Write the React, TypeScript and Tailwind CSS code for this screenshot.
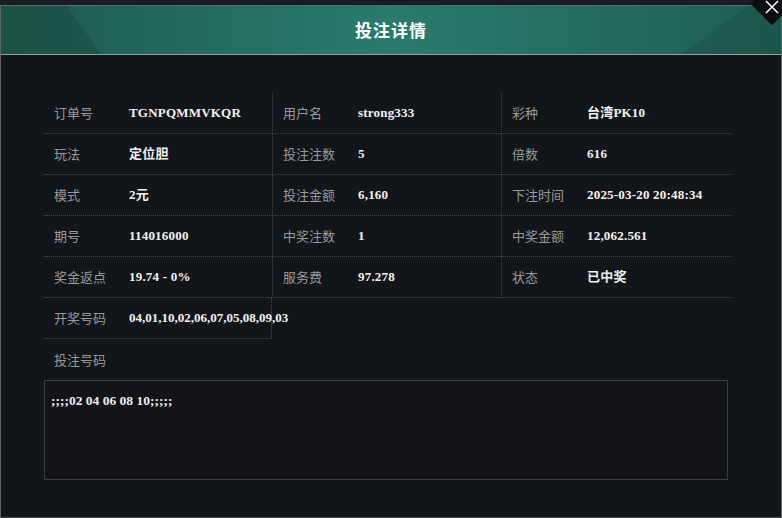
const rows: [string, string][][] = [
  [["订单号", "TGNPQMMVKQR"], ["用户名", "strong333"], ["彩种", "台湾PK10"]],
  [["玩法", "定位胆"], ["投注注数", "5"], ["倍数", "616"]],
  [["模式", "2元"], ["投注金额", "6,160"], ["下注时间", "2025-03-20 20:48:34"]],
  [["期号", "114016000"], ["中奖注数", "1"], ["中奖金额", "12,062.561"]],
  [["奖金返点", "19.74 - 0%"], ["服务费", "97.278"], ["状态", "已中奖"]],
];

const labelFont = "font-['Noto_Sans_CJK_SC',sans-serif]";
const valueFont = "font-['Liberation_Serif','Noto_Sans_CJK_SC',serif]";

function Cell({ label, value, first }: { label: string; value: string; first?: boolean }) {
  return (
    <div
      className={`flex h-[41px] items-center border-b border-dotted border-[#44474c] pl-[10px] ${
        first ? "" : "border-l"
      }`}
    >
      <span className={`w-[75px] shrink-0 text-[13px] text-[#9a9a9a] ${labelFont}`}>{label}</span>
      <span className={`whitespace-nowrap text-[13px] font-bold tracking-[0.2px] text-[#f2f2f2] ${valueFont}`}>
        {value}
      </span>
    </div>
  );
}

export default function App() {
  return (
    <div className="relative h-[518px] w-[782px] overflow-hidden bg-[#1a1c23]">
      <div className="mt-[5px] flex h-[513px] flex-col border border-[#5d6866] border-b-[#4a4f55]">
        <div className="relative flex h-[49px] items-center justify-center border-b border-[#8ea39e] bg-gradient-to-r from-[#1d5a4d] via-[#2a7b6d] to-[#1f5e52]">
          <div className="absolute inset-y-0 left-0 w-[100px] bg-[#17463d]/40 [clip-path:polygon(0_0,66px_0,100px_100%,0_100%)]" />
          <div className="absolute inset-y-0 right-0 w-[100px] bg-[#17463d]/30 [clip-path:polygon(68px_0,100%_0,100%_100%,0_100%)]" />
          <span className={`relative text-[17px] font-bold tracking-[1px] text-white ${labelFont}`}>投注详情</span>
        </div>
        <div className="flex-1 bg-[#121519] px-[43px] pt-[38px]">
          <div className="w-[688px]">
            {rows.map((r, i) => (
              <div key={i} className="grid grid-cols-[228px_229px_231px]">
                {r.map(([l, v], j) => (
                  <Cell key={l} label={l} value={v} first={j === 0} />
                ))}
              </div>
            ))}
            <div className="grid grid-cols-[228px_229px_231px]">
              <div className="flex h-[41px] items-center border-r border-b border-dotted border-[#44474c] pl-[10px]">
                <span className={`w-[75px] shrink-0 text-[13px] text-[#9a9a9a] ${labelFont}`}>开奖号码</span>
                <span className={`whitespace-nowrap text-[13px] font-bold text-[#f2f2f2] ${valueFont}`}>
                  04,01,10,02,06,07,05,08,09,03
                </span>
              </div>
            </div>
            <div className="flex h-[41px] items-center pl-[10px]">
              <span className={`text-[13px] text-[#9a9a9a] ${labelFont}`}>投注号码</span>
            </div>
            <div className="h-[100px] w-[684px] border border-[#3c3f44] bg-[#121418] px-[6px] pt-[6px]">
              <span className={`text-[13.5px] font-bold text-[#eeeeee] ${valueFont}`}>;;;;02 04 06 08 10;;;;;</span>
            </div>
          </div>
        </div>
      </div>
      <div className="absolute right-[-5px] top-[-11px] h-[30px] w-[30px] rotate-45 bg-[#0d0f12]" />
      <svg className="absolute right-[3px] top-0 h-[14px] w-[14px]" viewBox="0 0 14 14">
        <path d="M1 1 L13 13 M13 1 L1 13" stroke="#f4f4f4" strokeWidth="1.6" />
      </svg>
    </div>
  );
}
